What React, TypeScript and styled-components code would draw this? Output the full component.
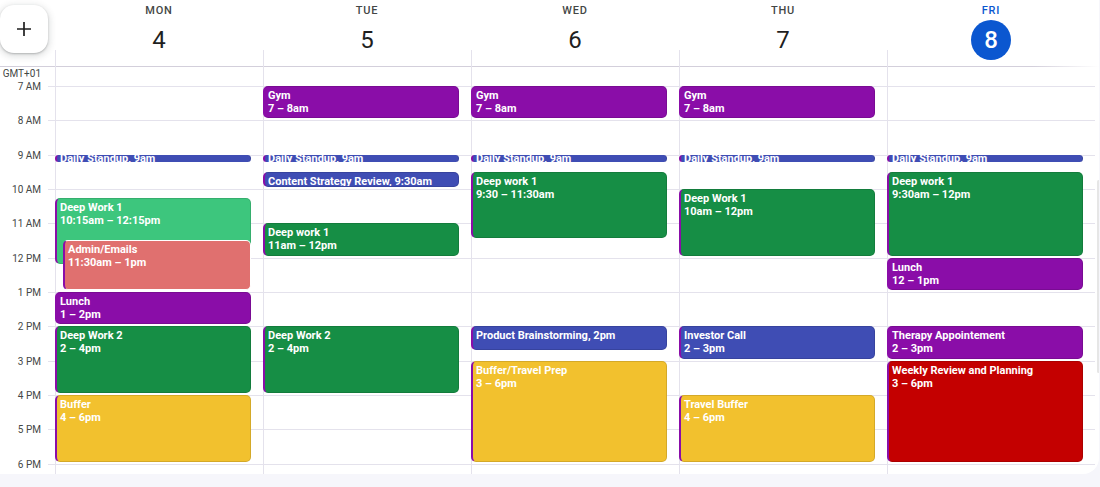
import styled, { createGlobalStyle } from "styled-components";

// week view geometry
const HOUR = 34.33;
const LEAD = 19; // space above the 7 AM line
const FIRST_HOUR = 7;
const HOURS = ["7 AM", "8 AM", "9 AM", "10 AM", "11 AM", "12 PM", "1 PM", "2 PM", "3 PM", "4 PM", "5 PM", "6 PM"];

type Tone = "grape" | "blueberry" | "basil" | "sage" | "flamingo" | "banana" | "tomato";

const tones: Record<Tone, string> = {
  grape: "#8a0da8",
  blueberry: "#3f4db4",
  basil: "#168e45",
  sage: "#3dc67d",
  flamingo: "#e0706f",
  banana: "#f2c12e",
  tomato: "#c40000",
};

interface CalEvent {
  title: string;
  time: string;
  start: number;
  end: number;
  tone: Tone;
  inset?: boolean;
}

interface Day {
  name: string;
  date: number;
  today?: boolean;
  events: CalEvent[];
}

const standup: CalEvent = { title: "Daily Standup", time: "9am", start: 9, end: 9.25, tone: "blueberry" };
const gym: CalEvent = { title: "Gym", time: "7 – 8am", start: 7, end: 8, tone: "grape" };

const week: Day[] = [
  {
    name: "MON",
    date: 4,
    events: [
      standup,
      { title: "Deep Work 1", time: "10:15am – 12:15pm", start: 10.25, end: 12.25, tone: "sage" },
      { title: "Admin/Emails", time: "11:30am – 1pm", start: 11.5, end: 13, tone: "flamingo", inset: true },
      { title: "Lunch", time: "1 – 2pm", start: 13, end: 14, tone: "grape" },
      { title: "Deep Work 2", time: "2 – 4pm", start: 14, end: 16, tone: "basil" },
      { title: "Buffer", time: "4 – 6pm", start: 16, end: 18, tone: "banana" },
    ],
  },
  {
    name: "TUE",
    date: 5,
    events: [
      gym,
      standup,
      { title: "Content Strategy Review", time: "9:30am", start: 9.5, end: 10, tone: "blueberry" },
      { title: "Deep work 1", time: "11am – 12pm", start: 11, end: 12, tone: "basil" },
      { title: "Deep Work 2", time: "2 – 4pm", start: 14, end: 16, tone: "basil" },
    ],
  },
  {
    name: "WED",
    date: 6,
    events: [
      gym,
      standup,
      { title: "Deep work 1", time: "9:30 – 11:30am", start: 9.5, end: 11.5, tone: "basil" },
      { title: "Product Brainstorming", time: "2pm", start: 14, end: 14.75, tone: "blueberry" },
      { title: "Buffer/Travel Prep", time: "3 – 6pm", start: 15, end: 18, tone: "banana" },
    ],
  },
  {
    name: "THU",
    date: 7,
    events: [
      gym,
      standup,
      { title: "Deep Work 1", time: "10am – 12pm", start: 10, end: 12, tone: "basil" },
      { title: "Investor Call", time: "2 – 3pm", start: 14, end: 15, tone: "blueberry" },
      { title: "Travel Buffer", time: "4 – 6pm", start: 16, end: 18, tone: "banana" },
    ],
  },
  {
    name: "FRI",
    date: 8,
    today: true,
    events: [
      standup,
      { title: "Deep work 1", time: "9:30am – 12pm", start: 9.5, end: 12, tone: "basil" },
      { title: "Lunch", time: "12 – 1pm", start: 12, end: 13, tone: "grape" },
      { title: "Therapy Appointement", time: "2 – 3pm", start: 14, end: 15, tone: "grape" },
      { title: "Weekly Review and Planning", time: "3 – 6pm", start: 15, end: 18, tone: "tomato" },
    ],
  },
];

const GlobalStyle = createGlobalStyle`
  body {
    margin: 0;
    background: #f6f6fb;
    font-family: Roboto, "Noto Sans", Arial, sans-serif;
  }
`;

const Panel = styled.div`
  width: 1099px;
  height: 474px;
  background: #fff;
  border-bottom-right-radius: 16px;
  overflow: hidden;
`;

const Header = styled.div`
  display: grid;
  grid-template-columns: 55px repeat(5, 208px) 1fr;
  height: 67px;
  background: linear-gradient(to right, #d3cfdb 94%, rgba(211, 207, 219, 0)) left bottom / 100% 1px no-repeat;
`;

const CreateCell = styled.div`
  padding-top: 5px;
`;

const CreateButton = styled.button`
  width: 48px;
  height: 48px;
  border: none;
  border-radius: 14px;
  background: #fff;
  box-shadow: 0 1px 2px rgba(60, 64, 67, 0.3), 0 2px 6px 2px rgba(60, 64, 67, 0.15);
  display: flex;
  align-items: center;
  justify-content: center;
  padding: 0;
`;

const DayHead = styled.div`
  display: flex;
  flex-direction: column;
  align-items: center;
  background: linear-gradient(#e4e2ec, #e4e2ec) left bottom / 1px 17px no-repeat;
`;

const DayName = styled.div<{ $today?: boolean }>`
  margin-top: 5px;
  font-size: 11px;
  line-height: 11px;
  font-weight: 500;
  letter-spacing: 0.8px;
  color: ${(p) => (p.$today ? "#0b57d0" : "#444746")};
`;

const DateNum = styled.div<{ $today?: boolean }>`
  margin-top: 4px;
  width: 40px;
  height: 40px;
  border-radius: 50%;
  display: flex;
  align-items: center;
  justify-content: center;
  font-size: 24px;
  font-weight: ${(p) => (p.$today ? 500 : 400)};
  color: ${(p) => (p.$today ? "#fff" : "#1f1f1f")};
  background: ${(p) => (p.$today ? "#0b57d0" : "transparent")};
`;

const Body = styled.div`
  display: grid;
  grid-template-columns: 55px repeat(5, 208px) 1fr;
  height: 407px;
`;

const Gutter = styled.div`
  display: flex;
  flex-direction: column;
`;

const GutterLead = styled.div`
  height: ${LEAD}px;
  padding: 2px 14px 0 0;
  box-sizing: border-box;
  text-align: right;
  font-size: 10px;
  line-height: 10px;
  color: #444746;
`;

const GutterRow = styled.div`
  display: grid;
  grid-template-columns: 48px 7px;
  height: ${HOUR}px;
  flex-shrink: 0;
`;

const HourLabel = styled.div`
  margin-top: -5px;
  padding-right: 7px;
  text-align: right;
  font-size: 10px;
  line-height: 12px;
  color: #444746;
`;

const Tick = styled.div`
  border-top: 1px solid #e4e2ec;
`;

const DayColumn = styled.div`
  position: relative;
  display: flex;
  flex-direction: column;
  border-left: 1px solid #e4e2ec;
`;

const Lead = styled.div`
  height: ${LEAD}px;
  flex-shrink: 0;
`;

const Slot = styled.div`
  height: ${HOUR}px;
  flex-shrink: 0;
  box-sizing: border-box;
  border-top: 1px solid #e4e2ec;
`;

const EventCard = styled.div<{ $tone: Tone; $inset?: boolean; $tiny?: boolean }>`
  position: absolute;
  left: ${(p) => (p.$inset ? "7px" : "-1px")};
  right: 12px;
  box-sizing: border-box;
  padding: ${(p) => (p.$tiny ? "0 3px" : "2px 3px")};
  background: ${(p) => tones[p.$tone]};
  border: 1px solid ${(p) => (p.$inset ? "#fff" : "rgba(0, 0, 0, 0.12)")};
  border-left: 2px solid ${tones.grape};
  ${(p) => p.$tiny && "border-top: 0; border-bottom: 0;"}
  border-radius: ${(p) => (p.$tiny ? "4px" : "5px")};
  color: #fff;
  font-size: 11px;
  line-height: ${(p) => (p.$tiny ? "8px" : "13px")};
  font-weight: 700;
  white-space: nowrap;
  overflow: hidden;
`;

const EventTitle = styled.div``;

const EventTime = styled.div``;

const ScrollTrack = styled.div`
  padding: 113px 0 0 2px;
`;

const Thumb = styled.div`
  width: 3px;
  height: 193px;
  border-radius: 2px;
  background: #e6e6e6;
`;

function PlusIcon() {
  return (
    <svg width="16" height="16" viewBox="0 0 16 16">
      <path d="M8 1v14M1 8h14" stroke="#1f1f1f" strokeWidth="1.7" fill="none" />
    </svg>
  );
}

function Event({ ev }: { ev: CalEvent }) {
  const length = ev.end - ev.start;
  const tiny = length <= 0.25;
  const top = LEAD + (ev.start - FIRST_HOUR) * HOUR;
  const height = length * HOUR - (tiny ? 1 : 2);
  return (
    <EventCard $tone={ev.tone} $inset={ev.inset} $tiny={tiny} style={{ top, height }}>
      {length < 1 ? (
        <EventTitle>{`${ev.title}, ${ev.time}`}</EventTitle>
      ) : (
        <>
          <EventTitle>{ev.title}</EventTitle>
          <EventTime>{ev.time}</EventTime>
        </>
      )}
    </EventCard>
  );
}

export default function App() {
  return (
    <>
      <GlobalStyle />
      <Panel>
        <Header>
          <CreateCell>
            <CreateButton aria-label="Create">
              <PlusIcon />
            </CreateButton>
          </CreateCell>
          {week.map((day) => (
            <DayHead key={day.name}>
              <DayName $today={day.today}>{day.name}</DayName>
              <DateNum $today={day.today}>{day.date}</DateNum>
            </DayHead>
          ))}
          <div />
        </Header>
        <Body>
          <Gutter>
            <GutterLead>GMT+01</GutterLead>
            {HOURS.map((h) => (
              <GutterRow key={h}>
                <HourLabel>{h}</HourLabel>
                <Tick />
              </GutterRow>
            ))}
          </Gutter>
          {week.map((day) => (
            <DayColumn key={day.name}>
              <Lead />
              {HOURS.map((h) => (
                <Slot key={h} />
              ))}
              {day.events.map((ev) => (
                <Event key={ev.title + ev.start} ev={ev} />
              ))}
            </DayColumn>
          ))}
          <ScrollTrack>
            <Thumb />
          </ScrollTrack>
        </Body>
      </Panel>
    </>
  );
}
